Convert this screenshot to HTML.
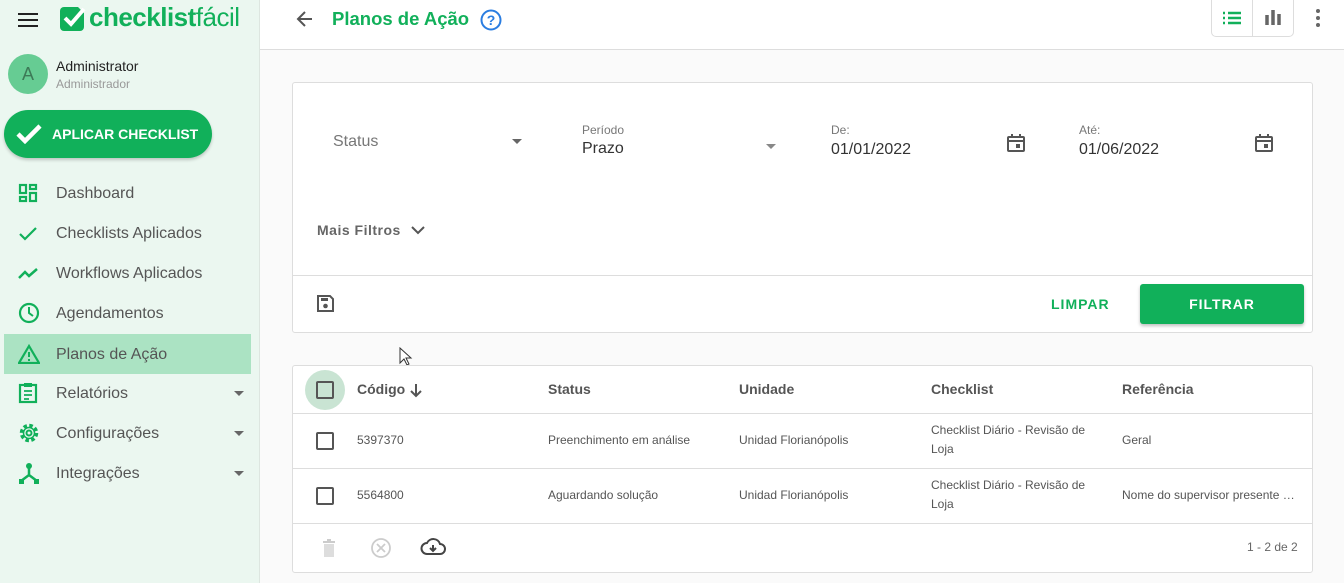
<!DOCTYPE html>
<html><head><meta charset="utf-8"><style>
*{box-sizing:border-box;margin:0;padding:0}
body{width:1344px;height:583px;overflow:hidden;font-family:"Liberation Sans",Arial,sans-serif;background:#fafafa;position:relative;color:#333}
.sb{position:absolute;left:0;top:0;width:260px;height:583px;background:#ebf7f0;border-right:1px solid #dde6e0}
.abs{position:absolute}
.nav{position:absolute;left:4px;width:247px;height:40px;display:flex;align-items:center;font-size:16px;color:#555}
.nav svg{position:absolute;left:14px}
.nav span{position:absolute;left:52px;top:12px}
.nav .car{position:absolute;left:230px;top:18px;width:0;height:0;border-left:5px solid transparent;border-right:5px solid transparent;border-top:5px solid #666}
.hdr{position:absolute;left:260px;top:0;right:0;height:50px;background:#fff;border-bottom:1px solid #ddd}
.card{position:absolute;background:#fff;border:1px solid #ddd;border-radius:3px}
.lbl{position:absolute;font-size:12px;color:#777}
.val{position:absolute;font-size:16px;color:#333}
.th{position:absolute;top:381px;font-size:14px;font-weight:bold;color:#555}
.td{position:absolute;font-size:12px;color:#555;line-height:19px}
.cb{position:absolute;width:18px;height:18px;border:2px solid #555;border-radius:2px}
.hl{position:absolute;left:293px;width:1019px;height:1px;background:#ddd}
</style></head><body>
<div class="sb">
  <div class="abs" style="left:18px;top:13px;width:20px;height:2px;background:#222;box-shadow:0 6px 0 #222,0 12px 0 #222"></div>
  <svg class="abs" style="left:60px;top:5px" width="26" height="26" viewBox="0 0 26 26"><rect x="0" y="2" width="24" height="24" rx="4" fill="#11b05a"/><path d="M16 0h10v10z" fill="#ebf7f0"/><path d="M5 13l6 6 13-15" stroke="#fff" stroke-width="4" fill="none"/></svg>
  <div class="abs" style="left:89px;top:2px;font-size:26px;color:#11b05a;font-weight:bold;letter-spacing:-0.5px">checklist<span style="font-weight:normal">fácil</span></div>
  <div class="abs" style="left:8px;top:54px;width:40px;height:40px;border-radius:50%;background:#66cc93;color:#3d7a57;font-size:18px;text-align:center;line-height:40px">A</div>
  <div class="abs" style="left:56px;top:58px;font-size:14px;color:#222">Administrator</div>
  <div class="abs" style="left:56px;top:77px;font-size:12px;color:#999">Administrador</div>
  <div class="abs" style="left:4px;top:110px;width:208px;height:48px;border-radius:24px;background:#11b05a;box-shadow:0 2px 3px rgba(0,0,0,.2)"></div>
  <svg class="abs" style="left:16px;top:124px" width="26" height="20"><path d="M2 10l7 7L24 2" stroke="#fff" stroke-width="4.5" fill="none"/></svg>
  <div class="abs" style="left:52px;top:126px;font-size:14px;font-weight:bold;color:#fff">APLICAR CHECKLIST</div>

  <div class="nav" style="top:173px"><svg width="20" height="20" viewBox="0 0 20 20" fill="none" stroke="#11b05a" stroke-width="2.2"><rect x="2" y="2" width="6" height="8"/><rect x="12" y="2" width="6" height="4"/><rect x="2" y="14" width="6" height="4"/><rect x="12" y="10" width="6" height="8"/></svg><span>Dashboard</span></div>
  <div class="nav" style="top:213px"><svg width="20" height="20"><path d="M2 11l5 5L18 5" stroke="#11b05a" stroke-width="2.2" fill="none"/></svg><span>Checklists Aplicados</span></div>
  <div class="nav" style="top:253px"><svg width="22" height="20"><path d="M1 15l6-6 4 4 8-7" stroke="#11b05a" stroke-width="2.5" fill="none"/></svg><span>Workflows Aplicados</span></div>
  <div class="nav" style="top:293px"><svg width="22" height="22"><circle cx="11" cy="11" r="9" stroke="#11b05a" stroke-width="2.2" fill="none"/><path d="M11 5v6l4 3" stroke="#11b05a" stroke-width="2" fill="none"/></svg><span>Agendamentos</span></div>
  <div class="nav" style="top:334px;background:#abe3c3"><svg width="22" height="20"><path d="M11 2L1 19h20z" stroke="#11b05a" stroke-width="2.2" fill="none"/><path d="M11 8v5M11 15v2" stroke="#11b05a" stroke-width="2"/></svg><span>Planos de Ação</span></div>
  <div class="nav" style="top:373px"><svg width="20" height="22"><rect x="2" y="3" width="16" height="17" stroke="#11b05a" stroke-width="2.2" fill="none"/><rect x="6" y="1" width="8" height="4" fill="#11b05a"/><path d="M6 9h8M6 13h8M6 17h5" stroke="#11b05a" stroke-width="1.8"/></svg><span>Relatórios</span><i class="car"></i></div>
  <div class="nav" style="top:413px"><svg width="22" height="22"><circle cx="11" cy="11" r="7.5" stroke="#11b05a" stroke-width="3.5" fill="none" stroke-dasharray="3.5 2.4"/><circle cx="11" cy="11" r="5.5" stroke="#11b05a" stroke-width="1.5" fill="none"/><circle cx="11" cy="11" r="2.5" stroke="#11b05a" stroke-width="2" fill="none"/></svg><span>Configurações</span><i class="car"></i></div>
  <div class="nav" style="top:453px"><svg width="22" height="22"><circle cx="11" cy="4" r="3" fill="#11b05a"/><path d="M11 6v7L3 19M11 13l8 6" stroke="#11b05a" stroke-width="2.5" fill="none"/><rect x="1" y="17" width="5" height="5" fill="#11b05a"/><rect x="16" y="17" width="5" height="5" fill="#11b05a"/></svg><span>Integrações</span><i class="car"></i></div>
</div>

<div class="hdr"></div>
<svg class="abs" style="left:295px;top:9px" width="20" height="20"><path d="M17 10H4M10 3l-7 7 7 7" stroke="#555" stroke-width="2" fill="none"/></svg>
<div class="abs" style="left:332px;top:8px;font-size:18.5px;font-weight:bold;color:#11b05a">Planos de Ação</div>
<svg class="abs" style="left:480px;top:9px" width="22" height="22"><circle cx="11" cy="11" r="9.5" stroke="#2a7de1" stroke-width="2" fill="none"/><text x="11" y="16" font-size="14" font-weight="bold" text-anchor="middle" fill="#2a7de1" font-family="Liberation Sans">?</text></svg>
<div class="abs" style="left:1211px;top:0;width:83px;height:37px;border:1px solid #ddd;border-top:none;border-radius:0 0 5px 5px;background:#fff"></div>
<div class="abs" style="left:1252px;top:0;width:1px;height:37px;background:#ddd"></div>
<svg class="abs" style="left:1222px;top:10px" width="20" height="16"><path d="M1 3h2M6 3h13M1 8h2M6 8h13M1 13h2M6 13h13" stroke="#11b05a" stroke-width="2.4"/></svg>
<svg class="abs" style="left:1264px;top:8px" width="18" height="18"><path d="M3 7v10M9 2v15M15 6v11" stroke="#666" stroke-width="3.5"/></svg>
<svg class="abs" style="left:1314px;top:8px" width="8" height="20"><circle cx="4" cy="3" r="2" fill="#666"/><circle cx="4" cy="10" r="2" fill="#666"/><circle cx="4" cy="17" r="2" fill="#666"/></svg>

<div class="card" style="left:292px;top:82px;width:1021px;height:251px"></div>
<div class="val" style="left:333px;top:133px;color:#777">Status</div>
<div class="abs" style="left:512px;top:139px;border-left:5px solid transparent;border-right:5px solid transparent;border-top:5px solid #666"></div>
<div class="lbl" style="left:582px;top:123px">Período</div>
<div class="val" style="left:582px;top:140px">Prazo</div>
<div class="abs" style="left:766px;top:144px;border-left:5px solid transparent;border-right:5px solid transparent;border-top:5px solid #888"></div>
<div class="lbl" style="left:831px;top:123px">De:</div>
<div class="val" style="left:831px;top:141px">01/01/2022</div>
<div class="lbl" style="left:1079px;top:123px">Até:</div>
<div class="val" style="left:1079px;top:141px">01/06/2022</div>
<svg class="abs" style="left:1006px;top:133px" width="20" height="20"><rect x="2" y="4" width="16" height="14" rx="1" stroke="#555" stroke-width="2" fill="none"/><path d="M2 8h16M6 1v4M14 1v4" stroke="#555" stroke-width="2"/><rect x="10" y="11" width="4" height="4" fill="#555"/></svg>
<svg class="abs" style="left:1254px;top:133px" width="20" height="20"><rect x="2" y="4" width="16" height="14" rx="1" stroke="#555" stroke-width="2" fill="none"/><path d="M2 8h16M6 1v4M14 1v4" stroke="#555" stroke-width="2"/><rect x="10" y="11" width="4" height="4" fill="#555"/></svg>
<div class="abs" style="left:317px;top:222px;font-size:14px;font-weight:bold;color:#666;letter-spacing:.5px">Mais Filtros</div>
<svg class="abs" style="left:411px;top:225px" width="14" height="10"><path d="M1 2l6 6 6-6" stroke="#555" stroke-width="2" fill="none"/></svg>
<div class="hl" style="top:275px"></div>
<svg class="abs" style="left:316px;top:294px" width="19" height="19"><path d="M2 2h12l3 3v12H2z" stroke="#555" stroke-width="2" fill="none"/><rect x="5" y="4" width="7" height="3" fill="#555"/><circle cx="9.5" cy="12" r="2.3" fill="#555"/></svg>
<div class="abs" style="left:1051px;top:296px;font-size:14px;font-weight:bold;color:#11b05a;letter-spacing:1px">LIMPAR</div>
<div class="abs" style="left:1140px;top:284px;width:164px;height:40px;background:#11b05a;border-radius:3px;box-shadow:0 2px 3px rgba(0,0,0,.25);color:#fff;font-size:14px;font-weight:bold;letter-spacing:1px;text-align:center;line-height:40px">FILTRAR</div>

<svg class="abs" style="left:399px;top:347px" width="14" height="20"><path d="M1 1v15l4-4 3 6 2-1-3-6h5z" fill="#fff" stroke="#333" stroke-width="1"/></svg>

<div class="card" style="left:292px;top:365px;width:1021px;height:208px"></div>
<div class="abs" style="left:305px;top:370px;width:40px;height:40px;border-radius:50%;background:#c9e4d3"></div>
<div class="cb" style="left:316px;top:381px"></div>
<div class="th" style="left:357px">Código</div>
<svg class="abs" style="left:408px;top:382px" width="16" height="16"><path d="M8 2v12M3 9l5 5 5-5" stroke="#555" stroke-width="2" fill="none"/></svg>
<div class="th" style="left:548px">Status</div>
<div class="th" style="left:739px">Unidade</div>
<div class="th" style="left:931px">Checklist</div>
<div class="th" style="left:1122px">Referência</div>
<div class="hl" style="top:413px"></div>
<div class="cb" style="left:316px;top:432px"></div>
<div class="td" style="left:357px;top:431px">5397370</div>
<div class="td" style="left:548px;top:431px">Preenchimento em análise</div>
<div class="td" style="left:739px;top:431px">Unidad Florianópolis</div>
<div class="td" style="left:931px;top:421px">Checklist Diário - Revisão de<br>Loja</div>
<div class="td" style="left:1122px;top:431px">Geral</div>
<div class="hl" style="top:468px"></div>
<div class="cb" style="left:316px;top:487px"></div>
<div class="td" style="left:357px;top:486px">5564800</div>
<div class="td" style="left:548px;top:486px">Aguardando solução</div>
<div class="td" style="left:739px;top:486px">Unidad Florianópolis</div>
<div class="td" style="left:931px;top:476px">Checklist Diário - Revisão de<br>Loja</div>
<div class="td" style="left:1122px;top:486px">Nome do supervisor presente …</div>
<div class="hl" style="top:523px"></div>
<svg class="abs" style="left:320px;top:538px" width="18" height="20"><path d="M3 4h12M7 2h4" stroke="#ccc" stroke-width="2"/><rect x="4" y="6" width="10" height="13" fill="#ddd"/></svg>
<svg class="abs" style="left:371px;top:538px" width="20" height="20"><circle cx="10" cy="10" r="9" stroke="#ccc" stroke-width="1.8" fill="none"/><path d="M6 6l8 8M14 6l-8 8" stroke="#ccc" stroke-width="1.8"/></svg>
<svg class="abs" style="left:420px;top:537px" width="26" height="20"><path d="M7 17h13a5 5 0 0 0 0-10 7 7 0 0 0-13-1 5 5 0 0 0 0 11z" stroke="#444" stroke-width="2" fill="none"/><path d="M13 8v6M10 11l3 3 3-3" stroke="#444" stroke-width="2" fill="none"/></svg>
<div class="abs" style="left:1247px;top:540px;font-size:12px;color:#666">1 - 2 de 2</div>
</body></html>
